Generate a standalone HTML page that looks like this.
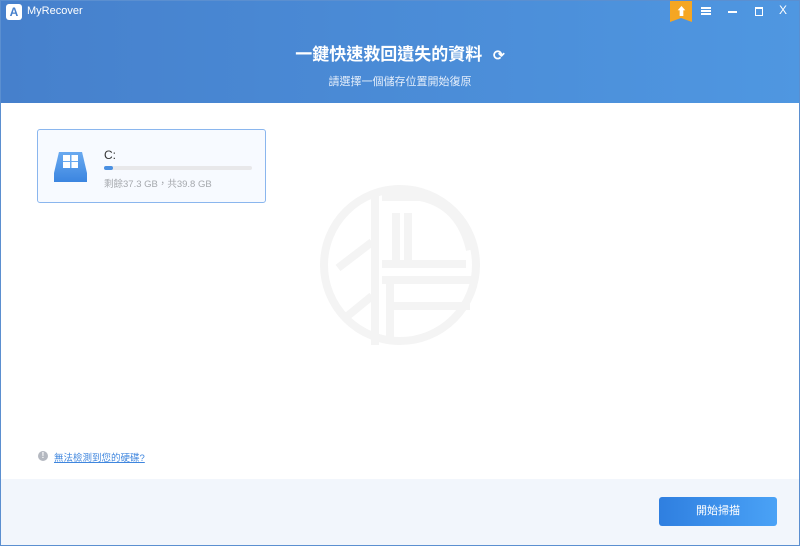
<!DOCTYPE html><html><head><meta charset="utf-8"><style>
*{margin:0;padding:0;box-sizing:border-box}
body{width:800px;height:546px;overflow:hidden;font-family:"Liberation Sans","Noto Sans CJK TC",sans-serif;background:#fff;position:relative}
.win{position:absolute;inset:0;border:1px solid #5b8fd0}
.hd{position:absolute;left:0;top:0;width:800px;height:103px;background:linear-gradient(90deg,#4680cc,#4f97e1)}
.ft{position:absolute;left:1px;top:479px;width:798px;height:66px;background:#f2f6fc}
</style></head><body>
<div class="hd">
 <div style="position:absolute;left:6px;top:4px;width:16px;height:16px;background:#fff;border-radius:3px;color:#4680cc;font-size:12px;font-weight:bold;text-align:center;line-height:16px">A</div>
 <div style="position:absolute;left:27px;top:5px;color:#fff;font-size:11px">MyRecover</div>
 <div style="position:absolute;left:670px;top:0;width:22px;height:22px;background:#f5a623;clip-path:polygon(0 0,100% 0,100% 100%,50% 82%,0 100%)"></div>
 <div style="position:absolute;left:676px;top:3px;color:#fff;font-size:11px;font-weight:bold">⬆</div>
 <div style="position:absolute;left:701px;top:7px;width:10px;height:8px;border-top:2px solid #fff;border-bottom:2px solid #fff"><div style="margin-top:1px;height:2px;background:#fff"></div></div>
 <div style="position:absolute;left:728px;top:11px;width:9px;height:2px;background:#fff"></div>
 <div style="position:absolute;left:755px;top:7px;width:8px;height:9px;border:1.5px solid #fff;border-top-width:2.5px"></div>
 <div style="position:absolute;left:779px;top:3px;color:#fff;font-size:12px">X</div>
 <div style="position:absolute;left:0;width:800px;top:40px;text-align:center;color:#fff;font-size:17px;font-weight:bold">一鍵快速救回遺失的資料 <span style="font-size:14px;margin-left:6px">⟳</span></div>
 <div style="position:absolute;left:0;width:800px;top:73px;text-align:center;color:#e4eefb;font-size:11px">請選擇一個儲存位置開始復原</div>
</div>
<div style="position:absolute;left:37px;top:129px;width:229px;height:74px;border:1px solid #8ab6ee;border-radius:3px;background:#f7faff">
 <div style="position:absolute;left:16px;top:22px;width:33px;height:30px;background:linear-gradient(#6aaaf0,#3b85e0);clip-path:polygon(15% 0,85% 0,100% 70%,100% 100%,0 100%,0 70%)"></div>
 <div style="position:absolute;left:25px;top:25px;width:15px;height:13px;background:linear-gradient(90deg,transparent 45%,#6aaaf0 45%,#6aaaf0 55%,transparent 55%),linear-gradient(transparent 45%,#6aaaf0 45%,#6aaaf0 55%,transparent 55%),#fff"></div>
 <div style="position:absolute;left:66px;top:18px;font-size:12px;color:#333">C:</div>
 <div style="position:absolute;left:66px;top:36px;width:148px;height:4px;border-radius:2px;background:#e8e8ea"><div style="width:9px;height:4px;border-radius:2px;background:#4a90e2"></div></div>
 <div style="position:absolute;left:66px;top:46px;font-size:9.5px;color:#a5a8ad">剩餘37.3 GB，共39.8 GB</div>
</div>
<svg style="position:absolute;left:0;top:0" width="800" height="546" fill="none" stroke="#f4f4f4" stroke-width="8">
 <circle cx="400" cy="265" r="76"/>
 <path d="M375 196V345M382 197H420Q460 205 470 250M396 213V262M408 213V262M382 264H466M382 280H477M390 280V340M390 306H470M372 242L338 268M372 296L345 318"/>
</svg>
<div style="position:absolute;left:38px;top:451px;width:10px;height:10px;border-radius:50%;background:#b4b8c0;color:#fff;font-size:8px;text-align:center;line-height:10px;font-weight:bold">!</div>
<div style="position:absolute;left:54px;top:450px;font-size:9.5px;color:#3f86de;text-decoration:underline">無法檢測到您的硬碟?</div>
<div class="ft"></div>
<div style="position:absolute;left:659px;top:497px;width:118px;height:29px;border-radius:3px;background:linear-gradient(90deg,#2f7fe0,#4aa2f6);color:#fff;font-size:11px;text-align:center;line-height:29px">開始掃描</div>
<div class="win"></div>
</body></html>
